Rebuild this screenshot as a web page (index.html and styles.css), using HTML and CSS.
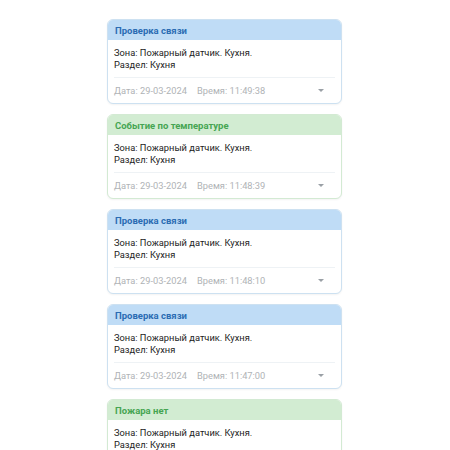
FILE: index.html
```html
<!DOCTYPE html>
<html lang="ru">
<head>
<meta charset="utf-8">
<link rel="stylesheet" href="styles.css">
</head>
<body>
<div class="list">
  <div class="card blue">
    <div class="head">Проверка связи</div>
    <div class="body">Зона: Пожарный датчик. Кухня.<br>Раздел: Кухня</div>
    <div class="foot"><span class="date">Дата: 29-03-2024</span><span class="time">Время: 11:49:38</span><span class="caret"></span></div>
  </div>
  <div class="card green">
    <div class="head">Событие по температуре</div>
    <div class="body">Зона: Пожарный датчик. Кухня.<br>Раздел: Кухня</div>
    <div class="foot"><span class="date">Дата: 29-03-2024</span><span class="time">Время: 11:48:39</span><span class="caret"></span></div>
  </div>
  <div class="card blue">
    <div class="head">Проверка связи</div>
    <div class="body">Зона: Пожарный датчик. Кухня.<br>Раздел: Кухня</div>
    <div class="foot"><span class="date">Дата: 29-03-2024</span><span class="time">Время: 11:48:10</span><span class="caret"></span></div>
  </div>
  <div class="card blue">
    <div class="head">Проверка связи</div>
    <div class="body">Зона: Пожарный датчик. Кухня.<br>Раздел: Кухня</div>
    <div class="foot"><span class="date">Дата: 29-03-2024</span><span class="time">Время: 11:47:00</span><span class="caret"></span></div>
  </div>
  <div class="card green">
    <div class="head">Пожара нет</div>
    <div class="body">Зона: Пожарный датчик. Кухня.<br>Раздел: Кухня</div>
    <div class="foot"><span class="date">Дата: 29-03-2024</span><span class="time">Время: 11:46:00</span><span class="caret"></span></div>
  </div>
</div>
</body>
</html>
```
FILE: styles.css
```css
html, body {
  margin: 0;
  padding: 0;
  background: #ffffff;
  height: 450px;
  overflow: hidden;
}
body {
  font-family: Roboto, "Liberation Sans", sans-serif;
}
.list {
  width: 235px;
  margin-left: 107px;
  padding-top: 19px;
  display: flex;
  flex-direction: column;
  gap: 10px;
}
.card {
  border: 1px solid #cde1f1;
  border-radius: 6px;
  overflow: hidden;
  background: #fff;
  box-shadow: 0 1px 2px rgba(0,0,0,0.05);
}
.card.green {
  border-color: #d3ead3;
}
.head {
  height: 20px;
  line-height: 21px;
  padding-left: 7px;
  font-size: 9.5px;
  font-weight: 700;
}
.blue .head {
  background: #bfdcf6;
  color: #2b6cb3;
}
.green .head {
  background: #d2ecd2;
  color: #46a553;
}
.body {
  margin: 0 6px;
  padding: 7px 0 6px 0;
  font-size: 9.3px;
  line-height: 12px;
  color: #222;
  border-bottom: 1px solid #eef2f5;
}
.foot {
  height: 25px;
  display: flex;
  align-items: center;
  padding-left: 6px;
  padding-right: 17px;
  font-size: 9.3px;
  color: #b0b3b6;
}
.time {
  margin-left: 10px;
}
.caret {
  margin-left: auto;
  width: 0;
  height: 0;
  border-left: 3px solid transparent;
  border-right: 3px solid transparent;
  border-top: 3px solid #9aa0a6;
}
```
